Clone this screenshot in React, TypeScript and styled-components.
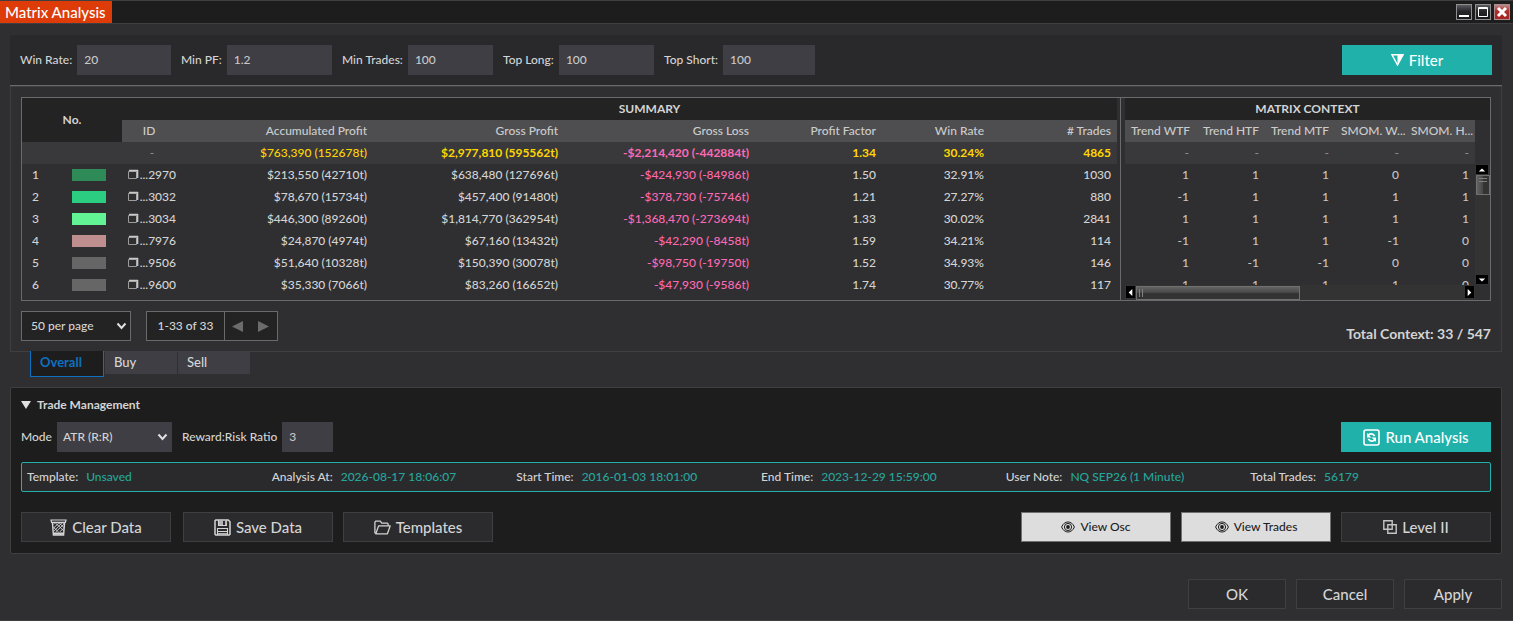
import React from "react";
import styled, { createGlobalStyle, css } from "styled-components";

const teal = "#20b2aa";
const line = "#3f3f42";
const frame = "#6a6a6c";

const Global = createGlobalStyle`
  *, *::before, *::after { box-sizing: border-box; }
  html, body { margin: 0; background: #2f2f31; }
  body, button, input, select, table {
    font-family: Lato, "Noto Sans", sans-serif;
    font-size: 12px;
    font-weight: 500;
    line-height: 16px;
    color: #d4d4d4;
  }
`;

const Window = styled.div`
  min-height: 100vh;
  display: flex;
  flex-direction: column;
  background: #2f2f31;
  border-top: 1px solid ${line};
  border-bottom: 1px solid ${line};
`;

const TitleBar = styled.header`
  height: 23px;
  display: flex;
  align-items: stretch;
  justify-content: space-between;
  background: #1d1d1d;
  border-bottom: 1px solid ${line};
`;

const Title = styled.h1`
  margin: 0;
  padding: 0 6px 0 5px;
  background: #dd3b08;
  color: #ffffff;
  font-size: 15px;
  font-weight: 500;
  line-height: 22px;
`;

const WindowControls = styled.div`
  display: flex;
  align-items: center;
  gap: 3px;
  padding-right: 3px;
`;

const WindowButton = styled.button<{ $close?: boolean }>`
  width: 16px;
  height: 16px;
  padding: 0;
  border: 1px solid ${(p) => (p.$close ? "#a98c8c" : "#8f8f8f")};
  background: ${(p) =>
    p.$close
      ? "linear-gradient(#b98a8a, #b02a2a 45%, #a92323)"
      : "linear-gradient(#5c5c60, #26262a 45%, #1a1a1c)"};
  svg { display: block; }
`;

const Main = styled.main`
  flex: 1;
  display: flex;
  flex-direction: column;
  padding: 11px 11px 11px 10px;
`;

const FilterBar = styled.form`
  display: flex;
  align-items: center;
  gap: 10px;
  padding: 10px;
  background: #29292b;
  border-bottom: 1px solid ${frame};
`;

const Field = styled.label`
  width: 151px;
  display: flex;
  align-items: center;
  gap: 5px;
  white-space: nowrap;
`;

const TextInput = styled.input`
  flex: 1;
  min-width: 0;
  height: 30px;
  padding: 0 7px 2px;
  border: 0;
  background: #3f3e45;
  color: #c8c8c8;
`;

const SelectWrap = styled.span<{ $boxed?: boolean }>`
  position: relative;
  display: flex;
  flex: 1;
  svg {
    position: absolute;
    right: 4px;
    top: 10px;
    pointer-events: none;
  }
  select {
    appearance: none;
    width: 100%;
    height: 30px;
    padding: 0 20px 0 ${(p) => (p.$boxed ? "9px" : "6px")};
    border: ${(p) => (p.$boxed ? `1px solid ${frame}` : "0")};
    border-radius: 0;
    background: ${(p) => (p.$boxed ? "#232323" : "#3f3e45")};
  }
`;

const Button = styled.button<{ $tone?: "teal" | "light"; $narrow?: boolean }>`
  width: ${(p) => (p.$narrow ? "98px" : "150px")};
  height: 30px;
  display: flex;
  align-items: center;
  justify-content: center;
  gap: 5px;
  padding: 0;
  border: 1px solid ${line};
  background: #2b2b2e;
  font-size: 15px;
  ${(p) =>
    p.$tone === "teal" &&
    css`
      border-color: ${teal};
      background: ${teal};
      color: #ffffff;
    `}
  ${(p) =>
    p.$tone === "light" &&
    css`
      border-color: #707070;
      background: #dddddd;
      color: #1e1e1e;
      font-size: 12px;
    `}
`;

const Spacer = styled.div`
  flex: 1;
`;

const ButtonGroup = styled.div`
  display: flex;
  gap: 10px;
`;

const ResultsPanel = styled.section`
  border: 1px solid ${line};
  padding: 10px;
`;

const TableFrame = styled.div`
  display: flex;
  height: 204px;
  border: 1px solid ${frame};
`;

const SummaryPane = styled.div`
  flex: 1;
  min-width: 0;
  padding-right: 3px;
  border-right: 1px solid ${frame};
`;

const ContextPane = styled.div`
  width: 369px;
  padding-left: 4px;
`;

const DataTable = styled.table`
  width: 100%;
  table-layout: fixed;
  border-collapse: collapse;
  th, td {
    height: 22px;
    padding: 0 6px;
    text-align: right;
    white-space: nowrap;
    overflow: hidden;
  }
`;

const GroupHead = styled.th`
  && { text-align: center; }
  background: #232323;
`;

const ColumnHead = styled.th<{ $id?: boolean }>`
  ${(p) => p.$id && css`&& { text-align: center; padding: 0 9px 0 3px; }`}
  background: #4e4e50;
  color: #cccccc;
  font-weight: 500;
`;

const TotalRow = styled.tr`
  background: #39393b;
  color: #ffd700;
  font-weight: 700;
`;

const DashCell = styled.td<{ $center?: boolean }>`
  && { text-align: ${(p) => (p.$center ? "center" : "right")}; }
  color: #8a8a8a;
  font-weight: 500;
`;

const FirstTotal = styled.td`
  font-weight: 500;
`;

const LossCell = styled.td`
  color: #ff69b4;
`;

const NumberCell = styled.td`
  && { text-align: left; padding-left: 10px; }
`;

const SwatchCell = styled.td`
  && { padding: 0 16px 0 0; }
`;

const Swatch = styled.div<{ $color: string }>`
  height: 12px;
  background: ${(p) => p.$color};
`;

const IdContent = styled.div`
  display: flex;
  align-items: center;
  justify-content: space-between;
`;

const ContextTitle = styled.h2`
  margin: 0;
  background: #232323;
  font-size: 12px;
  line-height: 22px;
  text-align: center;
`;

const ContextBody = styled.div`
  display: grid;
  grid-template-columns: 1fr 15px;
`;

const ContextClip = styled.div`
  height: 165px;
  overflow: hidden;
  table { color: #c4c4c4; }
`;

const VScroll = styled.div`
  margin-top: 44px;
  height: 121px;
  padding: 1px 0 1px 1px;
  display: flex;
  flex-direction: column;
  background: #333333;
`;

const HScroll = styled.div`
  height: 15px;
  padding: 1px;
  display: flex;
  background: #333333;
`;

const ScrollButton = styled.button<{ $wide?: boolean }>`
  width: ${(p) => (p.$wide ? "12px" : "9px")};
  height: ${(p) => (p.$wide ? "9px" : "12px")};
  flex: none;
  display: flex;
  align-items: center;
  justify-content: center;
  padding: 0;
  border: 0;
  background: #000000;
`;

const VThumb = styled.div`
  width: 14px;
  height: 20px;
  margin-top: 1px;
  margin-bottom: auto;
  border: 1px solid #707070;
  background: linear-gradient(90deg, #626262, #4a4a4a 45%, #333333 55%);
`;

const HThumb = styled.div`
  width: 164px;
  height: 14px;
  margin-left: 1px;
  margin-right: auto;
  border: 1px solid #707070;
  background: linear-gradient(#626262, #4a4a4a 45%, #333333 55%);
`;

const PagerRow = styled.div`
  display: flex;
  align-items: center;
  gap: 15px;
  margin-top: 10px;
`;

const PageSize = styled.label`
  width: 110px;
  display: flex;
`;

const Pager = styled.div`
  height: 30px;
  display: flex;
  align-items: center;
  border: 1px solid ${frame};
  background: #232323;
`;

const PagerText = styled.span`
  width: 78px;
  line-height: 28px;
  text-align: center;
  border-right: 1px solid ${frame};
`;

const PagerButton = styled.button`
  width: 26px;
  height: 28px;
  display: flex;
  align-items: center;
  justify-content: center;
  padding: 0 2px 0 0;
  border: 0;
  background: transparent;
`;

const TotalContext = styled.strong`
  align-self: flex-end;
  margin-left: auto;
  font-size: 14px;
  line-height: 14px;
`;

const Tabs = styled.div`
  height: 36px;
  margin-top: -1px;
  padding-left: 20px;
  display: flex;
  align-items: flex-start;
  gap: 1px;
`;

const Tab = styled.button<{ $active?: boolean }>`
  width: ${(p) => (p.$active ? "74px" : "72px")};
  height: ${(p) => (p.$active ? "26px" : "23px")};
  padding: 0 9px ${(p) => (p.$active ? "4px" : "2px")};
  text-align: left;
  font-size: 13px;
  line-height: 18px;
  border: 0;
  background: ${(p) => (p.$active ? "#1d1d1d" : "#3f3e45")};
  ${(p) =>
    p.$active &&
    css`
      border: 1px solid #0e70c0;
      border-top: 0;
      color: #0e70c0;
      font-weight: 700;
    `}
`;

const TradePanel = styled.section`
  padding: 9px 10px 11px;
  border: 1px solid ${line};
  border-radius: 2px;
  background: #1d1d1d;
`;

const PanelHeading = styled.button`
  display: flex;
  align-items: center;
  gap: 6px;
  padding: 0;
  border: 0;
  background: transparent;
  font-weight: 700;
`;

const Row = styled.div<{ $gapTop: number }>`
  display: flex;
  align-items: center;
  gap: 10px;
  margin-top: ${(p) => p.$gapTop}px;
`;

const ActionRow = styled(Row)`
  gap: 12px;
`;

const InfoStrip = styled.dl`
  display: grid;
  grid-template-columns: repeat(6, 1fr);
  margin: 10px 0 0;
  border: 1px solid ${teal};
  border-radius: 2px;
  background: #2a2a2d;
`;

const InfoItem = styled.div`
  display: flex;
  gap: 8px;
  padding-left: 5px;
  line-height: 28px;
  dt { color: #d4d4d4; }
  dd { margin: 0; color: #26a69a; }
`;

const Footer = styled.footer`
  display: flex;
  justify-content: flex-end;
  gap: 10px;
  margin-top: 25px;
`;

const Chevron = () => (
  <svg width="11" height="10" viewBox="0 0 11 10" fill="none" stroke="#e0e0e0" strokeWidth="2">
    <path d="M1.5 2.5 5.5 7 9.5 2.5" />
  </svg>
);

const Triangle = ({ d, color, size = 10 }: { d: string; color: string; size?: number }) => (
  <svg width={size} height={size} viewBox="0 0 10 10" fill={color}>
    <path d={d} />
  </svg>
);

const CopyIcon = () => (
  <svg width="11" height="12" viewBox="0 0 11 12" fill="none" stroke="#c8c8c8">
    <path d="M.5 2.5h8v7h-8z" stroke="#9c9c9c" />
    <path d="M1 1.5h9M9.5 1v8" strokeWidth="1.6" />
  </svg>
);

const FilterIcon = () => (
  <svg width="13" height="12" viewBox="0 0 13 12">
    <path d="M1 .8h11L6.5 11z" fill="none" stroke="#fff" strokeWidth="1.4" />
    <path d="M6.5 1H12L6.5 11z" fill="#fff" />
  </svg>
);

const RunIcon = () => (
  <svg width="17" height="17" viewBox="0 0 17 17" fill="none" stroke="#fff">
    <rect x="1" y="1" width="15" height="15" rx="2" strokeWidth="1.6" />
    <path d="M5.2 6.2c1.4-2 5-1.9 6.4.9M11.8 10.8c-1.4 2-5 1.9-6.4-.9" strokeWidth="1.7" />
    <path d="M4 4v4.4h4.4zM13 13V8.6H8.6z" fill="#fff" stroke="none" />
  </svg>
);

const TrashIcon = () => (
  <svg width="17" height="17" viewBox="0 0 17 17" fill="none" stroke="#d4d4d4">
    <path d="M1 1h15l-.6 2.4H1.6z" strokeWidth="1.2" />
    <path d="M2.4 3.5 3.4 16h10.2l1-12.5" strokeWidth="1.4" />
    <path d="M3.4 14.6h10.2" strokeWidth="2.2" />
    <path d="m3 5.6 2-2 9 8.4M3.2 9.4 9 3.8l5 4.8M14.2 5.4l-2-1.8-8.4 8.6M5.6 13l8.2-7.6M3.4 8.2 8.6 13M9.6 13l4-3.6" strokeWidth=".9" />
  </svg>
);

const SaveIcon = () => (
  <svg width="17" height="17" viewBox="0 0 17 17" fill="none" stroke="#d4d4d4">
    <path d="M1.8 1h12.4L16 2.8v12.4l-.8.8H1.8l-.8-.8V1.8z" strokeWidth="1.5" />
    <path d="M4.5 1v5.5h8V1" strokeWidth="1.1" />
    <path d="M3.5 16V9.5h10V16M3.5 12.5h10" strokeWidth="1.1" />
    <path d="M5 1h4v5H5zM11 1h1.5v5H11zM4 14h9v2H4z" fill="#b4b4b4" stroke="none" />
  </svg>
);

const FolderIcon = () => (
  <svg width="17" height="15" viewBox="0 0 17 15" fill="none" stroke="#d4d4d4" strokeWidth="1.3" strokeLinejoin="round">
    <path d="M1.8 13.6 .9 12.8V2.2L1.7 1.2h4.6l1.5 1.9h5.6l.7.8v1.8" />
    <path d="M1.8 13.8 4.6 5.9h11.6l-2.8 7.9z" />
  </svg>
);

const EyeIcon = () => (
  <svg width="14" height="12" viewBox="0 0 14 12" fill="none" stroke="#1e1e1e">
    <path d="M.6 6C3.2-.7 10.8-.7 13.4 6 10.8 12.7 3.2 12.7.6 6z" />
    <circle cx="7" cy="6" r="3.6" />
    <circle cx="7" cy="6" r="1.9" fill="#1e1e1e" stroke="none" />
  </svg>
);

const LevelIcon = () => (
  <svg width="14" height="14" viewBox="0 0 14 14" fill="none" stroke="#c4c4c4" strokeWidth="1.4">
    <path d="M.8 .8h8.4v8.4H.8zM4.8 4.8h8.4v8.4H4.8z" />
  </svg>
);

const filters: [string, string][] = [
  ["Win Rate:", "20"],
  ["Min PF:", "1.2"],
  ["Min Trades:", "100"],
  ["Top Long:", "100"],
  ["Top Short:", "100"],
];

const summaryWidths = [50, 50, 60, 191, 191, 191, 127, 108, 127];
const summaryHeads = ["Accumulated Profit", "Gross Profit", "Gross Loss", "Profit Factor", "Win Rate", "# Trades"];

const rows = [
  { color: "#2e8b57", id: "...2970", acc: "$213,550 (42710t)", gp: "$638,480 (127696t)", gl: "-$424,930 (-84986t)", pf: "1.50", wr: "32.91%", n: "1030" },
  { color: "#2bce80", id: "...3032", acc: "$78,670 (15734t)", gp: "$457,400 (91480t)", gl: "-$378,730 (-75746t)", pf: "1.21", wr: "27.27%", n: "880" },
  { color: "#62f394", id: "...3034", acc: "$446,300 (89260t)", gp: "$1,814,770 (362954t)", gl: "-$1,368,470 (-273694t)", pf: "1.33", wr: "30.02%", n: "2841" },
  { color: "#bf8f8f", id: "...7976", acc: "$24,870 (4974t)", gp: "$67,160 (13432t)", gl: "-$42,290 (-8458t)", pf: "1.59", wr: "34.21%", n: "114" },
  { color: "#666666", id: "...9506", acc: "$51,640 (10328t)", gp: "$150,390 (30078t)", gl: "-$98,750 (-19750t)", pf: "1.52", wr: "34.93%", n: "146" },
  { color: "#666666", id: "...9600", acc: "$35,330 (7066t)", gp: "$83,260 (16652t)", gl: "-$47,930 (-9586t)", pf: "1.74", wr: "30.77%", n: "117" },
];

const contextHeads = ["Trend WTF", "Trend HTF", "Trend MTF", "SMOM. W...", "SMOM. H..."];
const contextRows = [
  [1, 1, 1, 0, 1],
  [-1, 1, 1, 1, 1],
  [1, 1, 1, 1, 1],
  [-1, 1, 1, -1, 0],
  [1, -1, -1, 0, 0],
  [1, 1, 1, 1, 0],
];

const info: [string, string][] = [
  ["Template:", "Unsaved"],
  ["Analysis At:", "2026-08-17 18:06:07"],
  ["Start Time:", "2016-01-03 18:01:00"],
  ["End Time:", "2023-12-29 15:59:00"],
  ["User Note:", "NQ SEP26 (1 Minute)"],
  ["Total Trades:", "56179"],
];

const SummaryTable = () => (
  <DataTable>
    <colgroup>
      {summaryWidths.map((w, i) => (
        <col key={i} width={w} />
      ))}
    </colgroup>
    <thead>
      <tr>
        <GroupHead colSpan={2} rowSpan={2}>No.</GroupHead>
        <GroupHead />
        <GroupHead colSpan={6}>SUMMARY</GroupHead>
      </tr>
      <tr>
        <ColumnHead $id>ID</ColumnHead>
        {summaryHeads.map((h) => (
          <ColumnHead key={h}>{h}</ColumnHead>
        ))}
      </tr>
    </thead>
    <tbody>
      <TotalRow>
        <td colSpan={2} />
        <DashCell $center>-</DashCell>
        <FirstTotal>$763,390 (152678t)</FirstTotal>
        <td>$2,977,810 (595562t)</td>
        <LossCell>-$2,214,420 (-442884t)</LossCell>
        <td>1.34</td>
        <td>30.24%</td>
        <td>4865</td>
      </TotalRow>
      {rows.map((r, i) => (
        <tr key={r.id}>
          <NumberCell>{i + 1}</NumberCell>
          <SwatchCell>
            <Swatch $color={r.color} />
          </SwatchCell>
          <td>
            <IdContent>
              <CopyIcon />
              {r.id}
            </IdContent>
          </td>
          <td>{r.acc}</td>
          <td>{r.gp}</td>
          <LossCell>{r.gl}</LossCell>
          <td>{r.pf}</td>
          <td>{r.wr}</td>
          <td>{r.n}</td>
        </tr>
      ))}
    </tbody>
  </DataTable>
);

const ContextTable = () => (
  <DataTable>
    <thead>
      <tr>
        {contextHeads.map((h) => (
          <ColumnHead key={h}>{h}</ColumnHead>
        ))}
      </tr>
    </thead>
    <tbody>
      <TotalRow>
        {contextHeads.map((h) => (
          <DashCell key={h}>-</DashCell>
        ))}
      </TotalRow>
      {contextRows.map((r, i) => (
        <tr key={i}>
          {r.map((v, j) => (
            <td key={j}>{v}</td>
          ))}
        </tr>
      ))}
    </tbody>
  </DataTable>
);

export default function App() {
  return (
    <>
      <Global />
      <Window>
        <TitleBar>
          <Title>Matrix Analysis</Title>
          <WindowControls>
            <WindowButton aria-label="Minimize">
              <svg width="14" height="14"><path d="M2 10h10v2H2z" fill="#fff" /></svg>
            </WindowButton>
            <WindowButton aria-label="Maximize">
              <svg width="14" height="14" fill="none" stroke="#fff"><path d="M2.5 2.5h9v9h-9zM2 3.5h10" /></svg>
            </WindowButton>
            <WindowButton aria-label="Close" $close>
              <svg width="14" height="14" stroke="#fff" strokeWidth="3"><path d="m3 3 8 8M11 3l-8 8" /></svg>
            </WindowButton>
          </WindowControls>
        </TitleBar>
        <Main>
          <FilterBar onSubmit={(e) => e.preventDefault()}>
            {filters.map(([label, value]) => (
              <Field key={label}>
                {label}
                <TextInput defaultValue={value} />
              </Field>
            ))}
            <Spacer />
            <Button $tone="teal">
              <FilterIcon />
              Filter
            </Button>
          </FilterBar>
          <ResultsPanel>
            <TableFrame>
              <SummaryPane>
                <SummaryTable />
              </SummaryPane>
              <ContextPane>
                <ContextTitle>MATRIX CONTEXT</ContextTitle>
                <ContextBody>
                  <div>
                    <ContextClip>
                      <ContextTable />
                    </ContextClip>
                    <HScroll>
                      <ScrollButton aria-label="Scroll left">
                        <Triangle d="M7 1v8L3 5z" color="#fff" size={9} />
                      </ScrollButton>
                      <HThumb>
                        <svg width="8" height="12" stroke="#808080"><path d="M2.5 2v8M5.5 2v8" /></svg>
                      </HThumb>
                      <ScrollButton aria-label="Scroll right">
                        <Triangle d="M3 1v8l4-4z" color="#fff" size={9} />
                      </ScrollButton>
                    </HScroll>
                  </div>
                  <VScroll>
                    <ScrollButton $wide aria-label="Scroll up">
                      <Triangle d="M1 7h8L5 3z" color="#fff" size={8} />
                    </ScrollButton>
                    <VThumb>
                      <svg width="12" height="8" stroke="#808080" display="block"><path d="M2 2.5h8M2 5.5h8" /></svg>
                    </VThumb>
                    <ScrollButton $wide aria-label="Scroll down">
                      <Triangle d="M1 3h8L5 7z" color="#fff" size={8} />
                    </ScrollButton>
                  </VScroll>
                </ContextBody>
              </ContextPane>
            </TableFrame>
            <PagerRow>
              <PageSize>
                <SelectWrap $boxed>
                  <select aria-label="Rows per page">
                    <option>50 per page</option>
                  </select>
                  <Chevron />
                </SelectWrap>
              </PageSize>
              <Pager>
                <PagerText>1-33 of 33</PagerText>
                <PagerButton aria-label="Previous page">
                  <Triangle d="M10 0v10L0 5z" color="#6c6c6c" size={11} />
                </PagerButton>
                <PagerButton aria-label="Next page">
                  <Triangle d="M0 0v10l10-5z" color="#6c6c6c" size={11} />
                </PagerButton>
              </Pager>
              <TotalContext>Total Context: 33 / 547</TotalContext>
            </PagerRow>
          </ResultsPanel>
          <Tabs role="tablist">
            <Tab role="tab" aria-selected $active>Overall</Tab>
            <Tab role="tab">Buy</Tab>
            <Tab role="tab">Sell</Tab>
          </Tabs>
          <TradePanel>
            <PanelHeading aria-expanded>
              <Triangle d="M0 1h10L5 9z" color="#e0e0e0" />
              Trade Management
            </PanelHeading>
            <Row $gapTop={9}>
              <Field>
                Mode
                <SelectWrap>
                  <select>
                    <option>ATR (R:R)</option>
                  </select>
                  <Chevron />
                </SelectWrap>
              </Field>
              <Field>
                Reward:Risk Ratio
                <TextInput defaultValue="3" />
              </Field>
              <Spacer />
              <Button $tone="teal">
                <RunIcon />
                Run Analysis
              </Button>
            </Row>
            <InfoStrip>
              {info.map(([label, value]) => (
                <InfoItem key={label}>
                  <dt>{label}</dt>
                  <dd>{value}</dd>
                </InfoItem>
              ))}
            </InfoStrip>
            <ActionRow $gapTop={20}>
              <Button><TrashIcon />Clear Data</Button>
              <ButtonGroup>
                <Button><SaveIcon />Save Data</Button>
                <Button><FolderIcon />Templates</Button>
              </ButtonGroup>
              <Spacer />
              <ButtonGroup>
                <Button $tone="light"><EyeIcon />View Osc</Button>
                <Button $tone="light"><EyeIcon />View Trades</Button>
                <Button><LevelIcon />Level II</Button>
              </ButtonGroup>
            </ActionRow>
          </TradePanel>
          <Footer>
            <Button $narrow>OK</Button>
            <Button $narrow>Cancel</Button>
            <Button $narrow>Apply</Button>
          </Footer>
        </Main>
      </Window>
    </>
  );
}
